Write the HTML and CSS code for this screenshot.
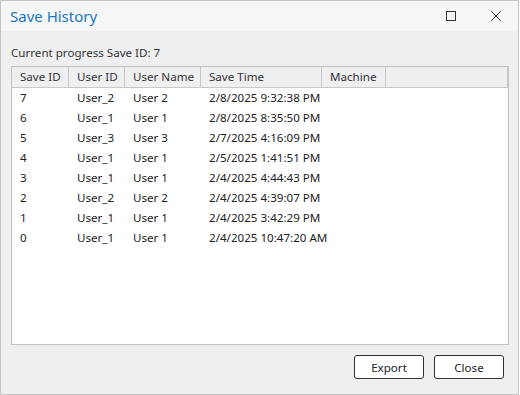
FILE: index.html
```html
<!DOCTYPE html>
<html>
<head>
<meta charset="utf-8">
<link rel="stylesheet" href="styles.css">
</head>
<body>
<div class="window">
  <div class="titlebar">
    <div class="title">Save History</div>
    <div class="controls">
      <span class="ctl"><svg width="12" height="12" viewBox="0 0 12 12"><rect x="1.5" y="1.5" width="9" height="9" fill="none" stroke="#333" stroke-width="1"/></svg></span>
      <span class="ctl"><svg width="12" height="12" viewBox="0 0 12 12"><path d="M1 1 L11 11 M11 1 L1 11" stroke="#333" stroke-width="1" fill="none"/></svg></span>
    </div>
  </div>
  <div class="content">
    <div class="label">Current progress Save ID: 7</div>
    <div class="list">
      <div class="grid header">
        <div class="hc">Save ID</div>
        <div class="hc">User ID</div>
        <div class="hc">User Name</div>
        <div class="hc">Save Time</div>
        <div class="hc">Machine</div>
        <div class="hc last"></div>
      </div>
      <div class="grid row"><div>7</div><div>User_2</div><div>User 2</div><div>2/8/2025 9:32:38 PM</div><div></div><div></div></div>
      <div class="grid row"><div>6</div><div>User_1</div><div>User 1</div><div>2/8/2025 8:35:50 PM</div><div></div><div></div></div>
      <div class="grid row"><div>5</div><div>User_3</div><div>User 3</div><div>2/7/2025 4:16:09 PM</div><div></div><div></div></div>
      <div class="grid row"><div>4</div><div>User_1</div><div>User 1</div><div>2/5/2025 1:41:51 PM</div><div></div><div></div></div>
      <div class="grid row"><div>3</div><div>User_1</div><div>User 1</div><div>2/4/2025 4:44:43 PM</div><div></div><div></div></div>
      <div class="grid row"><div>2</div><div>User_2</div><div>User 2</div><div>2/4/2025 4:39:07 PM</div><div></div><div></div></div>
      <div class="grid row"><div>1</div><div>User_1</div><div>User 1</div><div>2/4/2025 3:42:29 PM</div><div></div><div></div></div>
      <div class="grid row"><div>0</div><div>User_1</div><div>User 1</div><div>2/4/2025 10:47:20 AM</div><div></div><div></div></div>
    </div>
    <div class="buttons">
      <button class="btn">Export</button>
      <button class="btn">Close</button>
    </div>
  </div>
</div>
</body>
</html>
```

FILE: styles.css
```css
html, body {
  margin: 0;
  padding: 0;
  background: #ffffff;
}
body {
  font-family: "Noto Sans", "Open Sans", sans-serif;
  font-size: 11.6px;
  color: #222;
}
.window {
  width: 519px;
  height: 395px;
  box-sizing: border-box;
  border: 1px solid #c4c4c4;
  background: #eeeff1;
  display: flex;
  flex-direction: column;
}
.titlebar {
  height: 30px;
  background: #f5f6f6;
  display: flex;
  align-items: center;
  justify-content: space-between;
  padding-left: 9px;
  flex: none;
}
.title {
  color: #1a78c2;
  font-size: 15px;
  line-height: 20px;
}
.controls {
  display: flex;
  align-items: center;
  height: 100%;
}
.ctl {
  width: 45px;
  height: 30px;
  display: flex;
  align-items: center;
  justify-content: center;
}
.content {
  flex: 1;
  display: flex;
  flex-direction: column;
  padding: 12px 10px 15px 10px;
  min-height: 0;
}
.label {
  height: 20px;
  line-height: 20px;
  margin-bottom: 3px;
  color: #333;
}
.list {
  width: 498px;
  height: 279px;
  box-sizing: border-box;
  border: 1px solid #c3c3c3;
  background: #ffffff;
  flex: none;
}
.grid {
  display: grid;
  grid-template-columns: 57px 56px 76px 121px 64px 1fr;
}
.header {
  height: 20px;
  background: #eeeff1;
  border-bottom: 1px solid #c8c8c8;
  border-right: 1px solid #c8c8c8;
}
.hc {
  line-height: 20px;
  padding-left: 8px;
  border-right: 1px solid #c8c8c8;
  color: #333;
  white-space: nowrap;
}
.hc.last {
  border-right: none;
}
.row {
  height: 20px;
  line-height: 20px;
}
.row > div {
  padding-left: 8px;
  white-space: nowrap;
}
.buttons {
  display: flex;
  justify-content: flex-end;
  gap: 10px;
  margin-top: 10px;
  padding-right: 4px;
}
.btn {
  width: 70px;
  height: 24px;
  box-sizing: border-box;
  border: 1px solid #333;
  border-radius: 3px;
  background: #ffffff;
  font-family: "Noto Sans", "Open Sans", sans-serif;
  font-size: 11.6px;
  color: #222;
  padding: 0;
}
```
